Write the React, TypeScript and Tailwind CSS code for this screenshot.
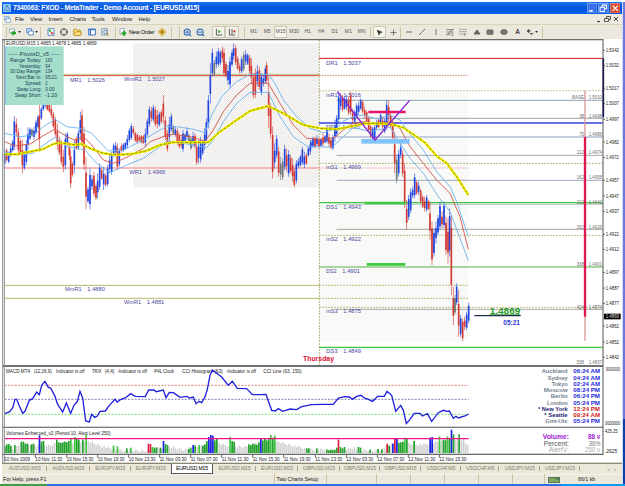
import type { ReactNode } from "react";
import { MousePointer2, Plus, ZoomIn, ZoomOut, FolderOpen, Crosshair } from "lucide-react";

// candles: x, high, low, side (1 up, 0 down, 2 flat)
type Candle = [number, number, number, number];
type Point = [number, number];

const tuesday: Candle[] = [
  [14, 325, 385, 1], [20, 325, 365, 0], [26, 335, 370, 1], [32, 315, 350, 1], [38, 300, 335, 1], [43, 228, 330, 1],
  [49, 235, 290, 0], [55, 265, 340, 0], [61, 295, 345, 0], [67, 300, 400, 0], [73, 335, 390, 1], [79, 300, 375, 1],
  [84, 262, 330, 1], [90, 262, 300, 1], [96, 265, 290, 2], [102, 260, 300, 1], [108, 240, 285, 1], [114, 225, 265, 1],
  [118, 180, 335, 0], [124, 200, 240, 1], [130, 178, 212, 1], [136, 170, 205, 1], [142, 185, 212, 0], [148, 190, 218, 0],
  [154, 195, 235, 0], [160, 215, 265, 0], [166, 230, 290, 0], [172, 250, 330, 0], [178, 290, 345, 0], [184, 300, 375, 0],
  [190, 330, 397, 0], [196, 280, 390, 1], [202, 275, 320, 1], [208, 305, 360, 0], [212, 330, 445, 0], [217, 365, 410, 0],
  [223, 300, 400, 1], [229, 290, 330, 0], [235, 270, 330, 1], [241, 215, 300, 1], [246, 208, 320, 0], [252, 260, 390, 0],
  [258, 350, 508, 0], [264, 440, 490, 1], [270, 385, 508, 1], [276, 405, 450, 1], [282, 395, 470, 0], [288, 430, 480, 0],
  [293, 400, 475, 1], [299, 370, 450, 1], [305, 385, 420, 0], [311, 380, 450, 1], [317, 400, 440, 0], [323, 375, 440, 1],
  [329, 345, 400, 1], [335, 335, 405, 1], [341, 310, 350, 1], [347, 305, 345, 1], [352, 310, 390, 0], [358, 325, 380, 1],
  [364, 310, 340, 0], [370, 310, 335, 1], [376, 305, 330, 1], [382, 285, 325, 1], [388, 265, 305, 1], [394, 250, 300, 1],
  [400, 258, 285, 0], [406, 275, 305, 0], [412, 280, 310, 0], [418, 285, 305, 0], [424, 285, 310, 0], [430, 285, 312, 0],
  [436, 265, 320, 1], [442, 235, 290, 1], [448, 198, 260, 1],
];

const wednesday: Candle[] = [
  [4, 200, 245, 0], [10, 195, 245, 1], [16, 200, 260, 0], [22, 210, 265, 0], [28, 215, 260, 1], [34, 210, 250, 0],
  [40, 165, 250, 0], [46, 230, 300, 0], [52, 270, 335, 0], [58, 230, 310, 1], [64, 220, 275, 1], [70, 255, 285, 2],
  [76, 260, 290, 1], [82, 265, 315, 0], [88, 280, 325, 0], [94, 290, 325, 0], [99, 270, 335, 1], [105, 280, 305, 1],
  [111, 262, 300, 1], [117, 280, 315, 2], [123, 290, 330, 2], [129, 275, 320, 1], [135, 280, 325, 0], [140, 310, 375, 0],
  [146, 300, 370, 1], [152, 290, 368, 1], [158, 300, 345, 1], [164, 265, 330, 1], [169, 235, 310, 1], [175, 165, 265, 1],
  [181, 70, 190, 1], [187, 25, 110, 1], [193, 60, 110, 2], [199, 35, 85, 1], [205, 25, 80, 1], [211, 30, 75, 1],
  [217, 20, 65, 0], [222, 25, 110, 0], [228, 65, 112, 0], [234, 75, 135, 1], [240, 50, 145, 1], [246, 30, 80, 1],
  [251, 10, 60, 1], [257, 15, 75, 0], [263, 50, 90, 0], [269, 70, 100, 0], [275, 50, 100, 1], [281, 35, 95, 2],
  [287, 30, 75, 1], [293, 40, 75, 1], [299, 45, 100, 0], [304, 55, 130, 0], [310, 100, 175, 0], [316, 85, 175, 0],
  [322, 75, 140, 1], [328, 80, 150, 0], [334, 100, 165, 1], [340, 105, 140, 1], [346, 78, 130, 1], [350, 65, 130, 0],
  [356, 110, 265, 0], [362, 190, 295, 0], [368, 260, 415, 0], [374, 310, 385, 1], [380, 285, 355, 1], [386, 320, 410, 0],
  [392, 350, 420, 2], [398, 355, 420, 2], [404, 315, 390, 1], [410, 325, 395, 0], [416, 330, 410, 1], [422, 345, 400, 0],
  [428, 355, 425, 0], [433, 385, 442, 0], [439, 360, 430, 1], [445, 355, 385, 1], [451, 345, 380, 1], [457, 320, 375, 1],
  [463, 335, 385, 1], [469, 340, 375, 0], [475, 320, 350, 1], [481, 300, 345, 1],
];

const thursday: Candle[] = [
  [3, 300, 325, 1], [9, 290, 325, 1], [15, 290, 325, 0], [21, 285, 320, 1], [27, 295, 325, 0], [33, 295, 320, 1],
  [39, 280, 320, 0], [45, 285, 310, 1], [51, 260, 310, 1], [57, 280, 320, 0], [63, 295, 328, 0], [69, 285, 330, 1],
  [75, 240, 305, 1], [80, 225, 290, 1], [86, 155, 250, 1], [92, 160, 210, 1], [98, 165, 215, 0], [104, 170, 210, 1],
  [110, 165, 210, 1], [116, 170, 225, 0], [122, 155, 225, 0], [128, 205, 250, 0], [134, 210, 250, 1], [140, 190, 235, 1],
  [146, 185, 225, 1], [152, 175, 210, 1], [158, 180, 220, 0], [164, 200, 235, 0], [170, 210, 250, 0], [176, 230, 275, 0],
  [182, 245, 295, 0], [188, 260, 298, 1], [194, 255, 300, 1], [200, 240, 270, 1], [206, 235, 265, 0], [212, 220, 255, 1],
  [218, 230, 270, 0], [224, 235, 280, 1], [230, 180, 270, 1], [236, 182, 245, 0], [242, 220, 265, 0], [248, 240, 300, 0],
  [254, 275, 400, 0], [260, 345, 430, 2], [266, 330, 410, 1], [272, 308, 355, 1], [278, 330, 410, 0], [284, 370, 505, 0],
  [290, 480, 570, 0], [296, 465, 540, 1], [302, 445, 520, 1], [308, 440, 475, 1], [314, 400, 475, 1], [320, 420, 465, 0],
  [326, 425, 465, 1], [332, 445, 490, 0], [338, 465, 505, 0], [344, 470, 515, 0], [350, 465, 515, 1], [356, 480, 510, 0],
  [360, 485, 600, 0], [366, 545, 675, 0], [372, 565, 650, 1], [378, 545, 610, 1], [384, 525, 585, 1], [390, 485, 570, 1],
  [396, 515, 565, 0], [402, 485, 565, 1], [408, 530, 645, 0], [414, 535, 670, 0], [419, 505, 650, 1], [424, 525, 765, 0],
  [430, 740, 855, 0], [435, 765, 825, 2], [440, 730, 795, 1], [446, 750, 890, 0], [452, 825, 890, 1], [458, 835, 903, 0],
  [464, 830, 870, 0], [470, 815, 870, 1], [476, 788, 850, 1],
];

const slow: Point[] = [
  [14, 343], [50, 343], [90, 335], [130, 327], [160, 312], [180, 308], [225, 315], [245, 312], [270, 325], [310, 340], [350, 345],
  [400, 341], [440, 332], [480, 315], [520, 307], [625, 307], [660, 275], [710, 240], [750, 213], [805, 198], [850, 220],
  [910, 255], [960, 265], [1010, 268], [1060, 258], [1095, 250], [1170, 252], [1210, 263], [1250, 290], [1275, 308], [1310, 348],
  [1340, 370], [1370, 410], [1405, 465],
];
const mid: Point[] = [
  [14, 305], [45, 318], [90, 312], [125, 290], [165, 267], [200, 290], [225, 300], [250, 290], [275, 315], [310, 360], [340, 370],
  [385, 350], [430, 325], [450, 305], [495, 288], [520, 283], [570, 290], [615, 303], [640, 270], [670, 215], [710, 165],
  [750, 130], [805, 130], [840, 190], [880, 255], [920, 295], [970, 298], [1005, 292], [1030, 270], [1060, 250], [1090, 245],
  [1130, 250], [1175, 245], [1200, 265], [1230, 320], [1270, 370], [1310, 420], [1350, 460], [1380, 530], [1405, 628],
];
const upper: Point[] = [
  [14, 280], [60, 290], [100, 285], [130, 260], [165, 238], [200, 260], [240, 265], [275, 280], [325, 333], [370, 330], [430, 300],
  [480, 270], [500, 260], [530, 260], [580, 268], [615, 278], [635, 225], [665, 170], [710, 125], [750, 103], [805, 103],
  [825, 130], [850, 180], [890, 230], [930, 265], [970, 278], [1010, 265], [1030, 243], [1060, 230], [1090, 225], [1130, 237],
  [1170, 225], [1200, 240], [1230, 282], [1270, 330], [1310, 395], [1350, 440], [1370, 485], [1405, 590],
];
const lower: Point[] = [
  [14, 335], [50, 345], [100, 340], [130, 315], [165, 292], [200, 320], [230, 325], [255, 330], [290, 370], [330, 398], [380, 375],
  [430, 355], [480, 320], [500, 303], [550, 310], [620, 323], [640, 300], [670, 245], [710, 190], [750, 157], [805, 157],
  [840, 230], [880, 290], [920, 318], [995, 322], [1030, 290], [1060, 262], [1110, 275], [1170, 262], [1200, 310], [1230, 355],
  [1270, 400], [1315, 470], [1350, 515], [1405, 662],
];
const cci: Point[] = [
  [14, 155], [28, 150], [38, 138], [45, 112], [50, 112], [58, 132], [68, 154], [75, 148], [88, 115], [98, 110], [110, 90], [118, 98],
  [125, 70], [135, 58], [145, 76], [152, 78], [165, 103], [172, 125], [188, 150], [199, 123], [212, 154], [222, 130], [232, 118],
  [240, 88], [248, 108], [257, 177], [268, 180], [275, 157], [284, 166], [292, 162], [300, 148], [316, 147], [328, 130], [345, 112],
  [352, 120], [363, 112], [376, 108], [392, 95], [406, 103], [436, 104], [446, 84], [462, 84], [468, 89], [490, 84], [498, 107],
  [508, 91], [520, 92], [540, 106], [560, 103], [570, 108], [580, 105], [588, 125], [597, 118], [605, 122], [615, 105], [622, 82],
  [630, 40], [637, 24], [648, 32], [665, 45], [685, 70], [697, 58], [712, 79], [740, 80], [757, 98], [780, 98], [798, 97],
  [815, 145], [826, 147], [835, 140], [848, 148], [870, 141], [890, 143], [905, 134], [935, 128], [965, 127], [1000, 127],
  [1015, 108], [1035, 104], [1048, 105], [1057, 112], [1070, 103], [1083, 100], [1093, 108], [1105, 112], [1118, 118],
  [1133, 103], [1153, 103], [1161, 88], [1175, 100], [1187, 148], [1202, 130], [1210, 145], [1219, 185], [1230, 172], [1243, 154],
  [1260, 154], [1267, 162], [1282, 155], [1295, 178], [1315, 152], [1330, 145], [1340, 148], [1348, 147], [1360, 169],
  [1368, 163], [1375, 168], [1395, 162], [1406, 156],
];

// quiet volume envelope
const quiet: Point[] = [
  [14, 20], [38, 12], [60, 26], [116, 24], [150, 22], [170, 32], [220, 30], [260, 38], [290, 26], [330, 14], [380, 8], [440, 8],
  [470, 14], [510, 18], [550, 10], [600, 20], [650, 32], [690, 20], [730, 18], [780, 30], [840, 32], [880, 22], [920, 12],
  [960, 10], [1020, 10], [1060, 16], [1090, 8], [1130, 8], [1160, 18], [1190, 36], [1230, 28], [1270, 24], [1300, 32],
  [1350, 40], [1390, 42], [1406, 14],
];
// marked volume bars: x, height, colour
const G = "#23a32b", L = "#3fc83f", B = "#1a22e6", R = "#e01f45";
const marked: [number, number, string][] = [
  [14, 20, G], [20, 26, G], [26, 27, G], [32, 22, G], [44, 24, G], [64, 34, G], [70, 34, G], [76, 28, G], [82, 28, G], [94, 26, G],
  [100, 28, G], [118, 53, B], [124, 34, G], [130, 36, G], [170, 40, G], [176, 32, G], [182, 30, G], [188, 32, G], [194, 34, G],
  [200, 32, G], [206, 36, G], [212, 44, L], [224, 48, L], [230, 42, G], [236, 40, G], [248, 40, G], [258, 56, L],
  [340, 22, L], [352, 20, L], [380, 14, G], [392, 16, L], [445, 28, R], [451, 27, R], [457, 18, L], [463, 16, G], [469, 17, G],
  [481, 16, G], [490, 36, B], [496, 27, G], [502, 24, G], [566, 12, G], [572, 16, L], [579, 24, B], [585, 22, G], [597, 24, L],
  [608, 22, G], [614, 26, G], [620, 36, G], [626, 48, B], [632, 54, B], [638, 52, B], [644, 38, G], [650, 42, G],
  [690, 48, L], [696, 36, G], [702, 34, G], [746, 26, G], [752, 24, G], [758, 28, G], [764, 26, G], [770, 24, G], [776, 32, G],
  [782, 44, B], [788, 38, G], [794, 42, G], [800, 38, G], [806, 44, G], [812, 54, L], [818, 46, G], [824, 52, L],
  [920, 14, G], [926, 14, G], [950, 14, G], [980, 10, G], [986, 8, G], [992, 10, G], [998, 8, G], [1004, 10, G], [1010, 16, G],
  [1015, 40, R], [1021, 18, G], [1027, 14, G], [1033, 18, G], [1075, 18, G], [1081, 16, G], [1110, 10, G], [1134, 12, G],
  [1145, 10, G], [1161, 28, R], [1167, 22, G], [1178, 28, B], [1184, 42, R], [1190, 42, B], [1196, 30, G], [1202, 32, G],
  [1208, 34, G], [1214, 46, L], [1220, 42, G], [1242, 36, G], [1290, 46, B], [1296, 48, B], [1318, 50, L], [1330, 40, G],
  [1336, 38, G], [1342, 50, L], [1348, 44, G], [1354, 70, B], [1360, 56, G], [1377, 56, G],
];

const levels: [number, number, number, string, number, string?][] = [
  [957, 1808, 175, "#dd1111", 3], [14, 957, 223, "#a8a850", 2], [14, 957, 227, "#d24a3c", 3],
  [957, 1406, 226, "#cf8a76", 3, "5 3"], [957, 1808, 272, "#b5b068", 2, "6 3"],
  [1010, 1808, 301, "#7c93a8", 2.5], [1010, 1808, 355, "#8f9494", 2.5], [957, 1808, 369, "#3440dd", 4.5],
  [1010, 1808, 411, "#b3bcd4", 4], [1010, 1808, 466, "#8f9494", 2.5], [957, 1808, 490, "#a5ab68", 2.5, "6 3"],
  [14, 957, 504, "#f3a6a6", 4], [957, 1406, 504, "#f1aaa4", 3.5, "5 3"], [1010, 1808, 541, "#8796ad", 2.5],
  [957, 1808, 608, "#3ec43e", 3.5], [1010, 1808, 613, "#c3cdc9", 4], [1010, 1808, 688, "#8f9488", 2.5],
  [957, 1808, 706, "#b5b068", 2.5, "6 3"], [957, 1808, 801, "#57b044", 3], [14, 957, 856, "#b9b66a", 3],
  [957, 1406, 856, "#b5b068", 2.5, "6 3"], [14, 957, 895, "#b9b66a", 3], [957, 1406, 895, "#b5b068", 2.5, "6 3"],
  [957, 1808, 922, "#b5b068", 2.5, "6 3"], [1010, 1808, 928, "#8f9494", 2.5], [957, 1808, 1042, "#3ec43e", 3.5],
];

const pivots: [number, number, number, string, string][] = [
  [210, 315, 245, "MR1", "1.5026"], [372, 495, 243, "WmR2", "1.5027"], [388, 496, 522, "WR1", "1.4966"],
  [978, 1083, 194, "DR1", "1.5037"], [978, 1083, 290, "mR1", "1.5016"], [978, 1080, 387, "DP1", "1.4995"],
  [978, 1083, 507, "mS1", "1.4969"], [978, 1083, 626, "DS1", "1.4943"], [978, 1083, 723, "mS2", "1.4922"],
  [978, 1080, 819, "DS2", "1.4901"], [978, 1083, 940, "mS3", "1.4875"], [978, 1083, 1059, "DS3", "1.4849"],
  [195, 315, 873, "MmR1", "1.4880"], [372, 493, 912, "WmR1", "1.4881"],
];

const prices: [number, string][] = [
  [151, "1.5042"], [196, "1.5032"], [265, "1.5017"], [311, "1.5007"], [358, "1.4997"], [426, "1.4982"], [472, "1.4972"],
  [541, "1.4957"], [588, "1.4947"], [634, "1.4937"], [703, "1.4922"], [748, "1.4912"], [817, "1.4897"], [864, "1.4887"],
  [910, "1.4877"], [978, "1.4862"], [1026, "1.4852"], [1072, "1.4842"],
];

const fibs: [number, string, string][] = [
  [292, "BASE", "1.5010"], [348, "38", "1.4998"], [403, "75", "1.4986"], [458, "112", "1.4974"], [532, "162", "1.4958"],
  [607, "212", "1.4942"], [681, "262", "1.4926"], [793, "338", "1.4901"], [922, "424", "1.4874"], [1088, "538", "1.4837"],
];

const clocks: [string, string, number, boolean][] = [
  ["Auckland", "06:24 AM", 1625, false], ["Sydney", "04:24 AM", 1643, false], ["Tokyo", "02:24 AM", 1655, false],
  ["Moscow", "08:24 PM", 1631, false], ["Berlin", "06:24 PM", 1652, false], ["London", "05:24 PM", 1641, false],
  ["* New York", "12:24 PM", 1614, true], ["* Seattle", "09:24 AM", 1633, true], ["Gmt-Utc", "05:24 PM", 1636, false],
];

const info: [string, string, number][] = [
  ["Range Today:", "163", 30], ["Yesterday:", "94", 57], ["30 Day Range:", "134", 30], ["Next Bar In:", "05:21", 48],
  ["Spread:", "2", 75], ["Swap Long:", "0.00", 50], ["Swap Short:", "-1.20", 44],
];

const times: [number, string][] = [
  [12, "10 Nov 2009"], [105, "10 Nov 11:30"], [199, "10 Nov 15:30"], [292, "10 Nov 19:30"], [385, "10 Nov 23:30"],
  [478, "11 Nov 03:30"], [571, "11 Nov 07:30"], [664, "11 Nov 11:30"], [757, "11 Nov 15:30"], [850, "11 Nov 19:30"],
  [945, "11 Nov 23:30"], [1038, "12 Nov 03:30"], [1131, "12 Nov 07:30"], [1224, "12 Nov 11:30"], [1317, "12 Nov 15:30"],
];

const headings: [number, number, string][] = [
  [18, 90, "MACD MT4"], [101, 155, "(12,26,9)"], [168, 254, "Indicator is off"], [276, 305, "TRIX"], [314, 343, "(4,4)"],
  [352, 441, "-Indicator is off"], [463, 522, "P4L Clock"], [546, 668, "CCI Histogram (63)"], [678, 768, "-Indicator is off"],
  [790, 905, "CCI Line (63, 150)"],
];

const volumeAt = (x: number) => {
  const i = Math.max(1, quiet.findIndex((p) => p[0] >= x));
  const [x0, y0] = quiet[i - 1];
  const [x1, y1] = quiet[i];
  return y0 + ((y1 - y0) * (x - x0)) / (x1 - x0) + ((x * 7) % 9) - 5;
};

const line = (pts: Point[]) => pts.map((p) => p.join(",")).join(" ");

type LabelProps = { x: number; end: number; y: number; size?: number; fill?: string; bold?: boolean; children: string };

const Label = ({ x, end, y, size = 15.5, fill = "#222", bold, children }: LabelProps) => (
  <text x={x} y={y} fontSize={size} fill={fill} fontWeight={bold ? 700 : 400} textLength={end - x} lengthAdjust="spacingAndGlyphs">
    {children}
  </text>
);

const Candles = ({ data, dx }: { data: Candle[]; dx: number }) => (
  <g transform={`translate(${dx} 120)`}>
    {data.map(([x, high, low, side], i) => {
      const color = side === 1 ? "#2146e0" : side === 0 ? "#d23a34" : "#6d7577";
      const pad = (low - high) * (i % 3 === 0 ? 0.3 : 0.16);
      return (
        <g key={x} fill={color}>
          <rect x={x - 1.2} y={high} width={2.4} height={low - high} opacity={0.75} />
          <rect x={x - 2.5} y={high + pad} width={5} height={low - high - pad * 1.8} />
        </g>
      );
    })}
  </g>
);

const Chart = () => (
  <svg viewBox="6 117 1860 1275" className="block w-[620px] h-[425px] shrink-0" fontFamily="'Liberation Sans', sans-serif">
    <defs>
      <pattern id="dots" width="6" height="6" patternUnits="userSpaceOnUse">
        <rect width="6" height="6" fill="#faf9f8" />
        <rect width="3" height="3" fill="#e6e5e4" />
        <rect x="3" y="3" width="3" height="3" fill="#eeedec" />
      </pattern>
    </defs>
    <rect x="6" y="117" width="1860" height="1275" fill="#fff" />
    <rect x="399" y="130" width="558" height="433" fill="url(#dots)" />
    <rect x="957" y="272" width="449" height="752" fill="#f9f9f8" />
    <line x1="958" x2="958" y1="120" y2="1095" stroke="#b5b585" strokeWidth="3" strokeDasharray="6 3" />

    {levels.map(([x1, x2, y, stroke, w, dash], i) => (
      <line key={i} x1={x1} x2={x2} y1={y} y2={y} stroke={stroke} strokeWidth={w} strokeDasharray={dash} />
    ))}
    {pivots.map(([x, end, y, name, value]) => (
      <g key={name}>
        <Label x={x} end={end - 70} y={y} size={18} fill="#4a4a9c">{name}</Label>
        <Label x={end - 53} end={end} y={y} size={18} fill="#4a4a9c">{value}</Label>
      </g>
    ))}

    <Candles data={tuesday} dx={0} />
    <Candles data={wednesday} dx={450} />
    <Candles data={thursday} dx={930} />

    <g transform="translate(0 120)" fill="none" strokeLinejoin="round">
      <polyline points={line(upper)} stroke="#6fb4ec" strokeWidth="2.8" />
      <polyline points={line(lower)} stroke="#6fb4ec" strokeWidth="2.8" />
      <polyline points={line(mid)} stroke="#d4564e" strokeWidth="2.8" />
      <polyline points={line(slow)} stroke="#f8f400" strokeWidth="7.5" />
      <polyline points={line(slow)} stroke="#6b6b00" strokeWidth="2.2" strokeDasharray="9 4" />
      <rect x="1084" y="297" width="145" height="14" fill="#82c3fa" />
      <path d="M1105 216h112" stroke="#e8156a" strokeWidth="7" />
      <path d="M1095 489h122M1100 673h116" stroke="#3ecb3e" strokeWidth="8" />
      <path d="M1012 155L1125 300L1229 181" stroke="#8f22cf" strokeWidth="4" />
      <path d="M1755 152v750" stroke="#d79a98" strokeWidth="4" />
      <path d="M1755 291v539" stroke="#e3174f" strokeWidth="7" />
    </g>

    {fibs.map(([y, level, value]) => (
      <g key={y}>
        <Label x={1752 - level.length * (level === "BASE" ? 9 : 7.3)} end={1752} y={y + 5} size={14.5} fill="#6f6f6f">{level}</Label>
        <Label x={1766} end={1806} y={y + 5} size={14.5} fill="#6f6f6f">{value}</Label>
      </g>
    ))}

    <Label x={1469} end={1561} y={942} size={29} fill="#2d9a2d" bold>1.4869</Label>
    <path d="M1469 944h92" stroke="#2d9a2d" strokeWidth="2.5" />
    <path d="M1423 947h139" stroke="#22304a" strokeWidth="3.5" />
    <Label x={1510} end={1560} y={974} size={19} fill="#2a35d6" bold>05:21</Label>
    <Label x={909} end={1002} y={1082} size={20} fill="#dc1238" bold>Thursday</Label>

    {/* pivots box */}
    <rect x="15" y="139" width="176" height="176" fill="#a5dfcc" />
    <rect x="15" y="139" width="4" height="176" fill="#8fc6ee" />
    <Label x={18} end={290} y={136} size={15}>EURUSD,M15  1.4865 1.4878 1.4865 1.4869</Label>
    <Label x={25} end={181} y={167} fill="#1c3d53">----- PivotsD_v5 -----</Label>
    {info.map(([name, value, x], i) => (
      <g key={name}>
        <Label x={x} end={125} y={185 + i * 17.6} fill="#173d54">{name}</Label>
        <Label x={136} end={136 + value.length * 7} y={185 + i * 17.6} fill="#173d54">{value}</Label>
      </g>
    ))}

    {/* indicator windows */}
    <rect x="6" y="1095" width="1803" height="6" fill="#6f7273" />
    <path d="M14 1156H1406" stroke="#d96a5f" strokeWidth="2.5" strokeDasharray="6 4" />
    <path d="M14 1198H1406" stroke="#6b6bb0" strokeWidth="2.5" strokeDasharray="6 4" />
    <path d="M14 1243H1406" stroke="#5cd65c" strokeWidth="2.5" strokeDasharray="6 4" />
    {headings.map(([x, end, text]) => <Label key={x} x={x} end={end} y={1119} size={15}>{text}</Label>)}
    <polyline points={line(cci)} transform="translate(0 1086)" fill="none" stroke="#2020dd" strokeWidth="4" />
    <rect x="6" y="1280" width="1803" height="4" fill="#777a7b" />

    <g transform="translate(0 1086)">
      {Array.from({ length: 234 }, (_, i) => 14 + i * 5.96).map((x) => {
        const h = Math.max(4, volumeAt(x));
        return <rect key={x} x={x - 2} y={273 - h} width={4.4} height={h} fill="#cfcfcf" />;
      })}
      {marked.map(([x, h, fill]) => <rect key={x} x={x - 2} y={273 - h} width={5} height={h} fill={fill} />)}
    </g>
    <path d="M14 1316H1406" stroke="#ee1488" strokeWidth="3.5" />
    <Label x={18} end={332} y={1304} size={15}>Volumes Enhanced_v2  (Period 10, Alert Level 250)</Label>
    <rect x="6" y="1361" width="1803" height="4" fill="#6a6d6e" />

    {clocks.map(([city, time, x, open], i) => (
      <g key={city}>
        <Label x={x} end={1703} y={1120 + i * 18.8} size={18} bold fill={open ? "#1d1d78" : "#73818f"}>{city}</Label>
        <Label x={1720} end={1800} y={1120 + i * 18.8} size={18} bold fill={open ? "#cf2020" : "#2727d8"}>{time}</Label>
      </g>
    ))}
    <Label x={1628} end={1707} y={1317} size={19} bold fill="#a020d0">Volume:</Label>
    <Label x={1764} end={1801} y={1317} size={19} bold fill="#a020d0">88 v</Label>
    <Label x={1631} end={1707} y={1337} size={19} fill="#555">Percent:</Label>
    <Label x={1766} end={1801} y={1337} size={19} fill="#777">36%</Label>
    <Label x={1646} end={1707} y={1357} size={19} fill="#aaa">AlertV:</Label>
    <Label x={1754} end={1801} y={1357} size={19} fill="#aaa">250 v</Label>

    {/* price scale */}
    <path d="M1809 117V1365" stroke="#555" strokeWidth="3" />
    <path d="M1810 175V351" stroke="#1d1d50" strokeWidth="5" />
    {prices.map(([y, text]) => (
      <g key={y}>
        <path d={`M1810 ${y}h5`} stroke="#444" strokeWidth="2.5" />
        <Label x={1817} end={1857} y={y + 5}>{text}</Label>
      </g>
    ))}
    <rect x="1812" y="941" width="50" height="17" fill="#000" />
    <Label x={1817} end={1857} y={955} fill="#ddd">1.4869</Label>
    <Label x={1815} end={1860} y={1114} size={14}>.9000000</Label>
    <Label x={1813} end={1860} y={1276} size={14}>.9000000</Label>
    <Label x={1815} end={1853} y={1299} size={15}>425.25</Label>
    <Label x={1815} end={1852} y={1358} size={15}>.2625</Label>

    {times.map(([x, text], i) => (
      <g key={x}>
        {i > 0 && <path d={`M${x + 1} 1365v8`} stroke="#444" strokeWidth="2.5" />}
        <Label x={x + 1} end={x + (i ? 82 : 78)} y={1382}>{text}</Label>
      </g>
    ))}
    <rect x="6" y="1388" width="1860" height="4" fill="#8a8672" />
    <path d="M8 117V1388" stroke="#8c8c8c" strokeWidth="3" />
    <path d="M13 117V1388" stroke="#8a8d8d" strokeWidth="3" />
    <path d="M6 119H1809" stroke="#6b6b6b" strokeWidth="4" />
  </svg>
);

const Cell = ({ children, wide }: { children: ReactNode; wide?: boolean }) => (
  <div className={wide ? "w-[15.5px] flex items-center justify-center gap-[1px]" : "w-[13.6px] flex items-center justify-center"}>{children}</div>
);

const Sep = () => <div className="w-[1px] h-[11px] bg-[#c9c3a0]" />;

const Caret = () => (
  <svg viewBox="0 0 4 3" className="w-[3px] h-[2px]"><path d="M0 0h4L2 3z" fill="#222" /></svg>
);

const Icon = ({ children }: { children: ReactNode }) => (
  <svg viewBox="0 0 24 24" className="w-[8px] h-[8px]" fill="none" stroke="#55584f" strokeWidth="2.5">{children}</svg>
);

const frames = ["M1", "M5", "M15", "M30", "H1", "H4", "D1", "W1", "MN"];

const Toolbar = () => (
  <div className="h-[15px] bg-[#ebe9dd] border-t border-[#d8d3b4] flex items-center shrink-0 pl-[4px] text-[5px] text-[#555]">
    <Sep />
    <Cell wide>
      <Icon><path d="M2 3h15v12H2z" fill="#fff" stroke="#8a9aa8" /><path d="M13 9v13M7 15h14" stroke="#24a52b" strokeWidth="6" /></Icon>
      <Caret />
    </Cell>
    <div className="w-[2px]" />
    <Cell wide>
      <Icon><path d="M2 2h15v12H2z" fill="#cfe3fa" stroke="#4d80c4" /><path d="M8 9h14v12H8z" fill="#fff" stroke="#4d80c4" /></Icon>
      <Caret />
    </Cell>
    <Sep />
    <div className="w-[3px]" />
    <Cell><Icon><path d="M3 2h18v20H3z" fill="#fff" stroke="#3f78c4" /><path d="M6 6l6 5" stroke="#24a52b" strokeWidth="5" /><path d="M12 13l6 5" stroke="#dd3333" strokeWidth="5" /></Icon></Cell>
    <Cell><Crosshair size={8} color="#555" strokeWidth={3} /></Cell>
    <Cell><FolderOpen size={9} color="#b88b1c" fill="#ffe27a" strokeWidth={2.5} /></Cell>
    <Cell><Icon><path d="M2 3h20v18H2z" fill="#fff" stroke="#3f78c4" strokeWidth="3" /><path d="M2 5h20M7 5v16" stroke="#3f78c4" strokeWidth="4" /></Icon></Cell>
    <Cell><Icon><path d="M2 2h17v19H2z" fill="#dce8f4" stroke="#7b92ac" /><circle cx="13" cy="12" r="5" stroke="#44739e" fill="#fff" /><path d="M17 16l5 6" stroke="#b88b1c" strokeWidth="4" /></Icon></Cell>
    <div className="w-[3px]" />
    <Sep />
    <div className="w-[3px]" />
    <div className="w-[9px] flex justify-center">
      <Icon><path d="M3 1h12v17H3z" fill="#fff" stroke="#8a9aa8" /><path d="M15 9v14M8 16h14" stroke="#24a52b" strokeWidth="6" /></Icon>
    </div>
    <div className="w-[27px] pl-[1px] text-[5.6px] tracking-[-0.2px] text-black whitespace-nowrap">New Order</div>
    <Cell><Icon><path d="M12 1l11 11-11 11L1 12z" fill="#f7cf52" stroke="#b98b1c" /><path d="M12 6v12M7 12h10" stroke="#80600a" strokeWidth="3" /></Icon></Cell>
    <div className="w-[2px]" />
    <Sep />
    <div className="w-[7px]" />
    <Sep />
    <div className="w-[1px]" />
    <Cell><ZoomIn size={9} color="#3a73bb" strokeWidth={3} /></Cell>
    <Cell><ZoomOut size={9} color="#3a73bb" strokeWidth={3} /></Cell>
    <div className="w-[4px]" />
    <div className="w-[13.6px] h-[12px] flex items-center justify-center bg-[#f5f4ec] border border-[#cbc8b4]">
      <Icon><path d="M4 2v19h18" strokeWidth="3" /><path d="M10 5v11l8-5z" fill="#24a52b" stroke="none" /></Icon>
    </div>
    <div className="w-[13.6px] h-[12px] flex items-center justify-center bg-[#f5f4ec] border border-[#cbc8b4]">
      <Icon><path d="M4 2v19h18M12 3v15" strokeWidth="3" /><path d="M22 5v10l-8-5z" fill="#c33" stroke="none" /></Icon>
    </div>
    <div className="w-[5px]" />
    <Sep />
    <div className="w-[2px]" />
    {frames.map((f) => (
      <div key={f} className={f === "M15" ? "w-[13.5px] h-[12px] flex items-center justify-center bg-[#f6f5ee] border border-[#cbc8b4]" : "w-[13.5px] flex items-center justify-center"}>{f}</div>
    ))}
    <div className="w-[2px]" />
    <Sep />
    <div className="w-[2px]" />
    <div className="w-[13px] h-[12px] flex items-center justify-center bg-[#f6f5ee] border border-[#cbc8b4]">
      <MousePointer2 size={7} color="#333" fill="#333" />
    </div>
    <Cell><Plus size={9} color="#555" strokeWidth={2} /></Cell>
    <Sep />
    <div className="w-[1px]" />
    <Cell><Icon><path d="M3 12h18" /></Icon></Cell>
    <Cell><Icon><path d="M3 21L21 3" /></Icon></Cell>
    <Cell><Icon><path d="M12 3v18" /></Icon></Cell>
    <Cell><Icon><path d="M1 5h22M1 12h22M1 19h12M3 22L21 2M16 17h6M16 22h6" strokeWidth="2" /></Icon></Cell>
    <Cell><Icon><path d="M1 4h22M1 11h22M1 18h13M17 15v8M14 19h8" strokeWidth="2" strokeDasharray="4 2" /></Icon></Cell>
    <Cell><Icon><path d="M12 6l9 12H3z" fill="#666" /></Icon></Cell>
    <Cell><Icon><rect x="3" y="6" width="18" height="13" rx="2" fill="#777" /></Icon></Cell>
    <Cell><Icon><ellipse cx="12" cy="12" rx="10" ry="7" fill="#777" /></Icon></Cell>
    <Cell><span className="text-[6.5px] font-bold text-[#444]">A</span></Cell>
    <Cell wide><Icon><path d="M3 9l5-5 5 5-5 5zM12 15l4 5 6-5" fill="#555" /></Icon><Caret /></Cell>
    <div className="w-[2px]" />
    <Sep />
  </div>
);

const tabs: [string, string][] = [
  ["AUDUSD,M15", "w-[43.5px]"], ["AUDUSD,M15", "w-[43.5px]"], ["EURJPY,M15", "w-[40.5px]"], ["EURJPY,M15", "w-[40.5px]"],
  ["EURUSD,M15", "w-[42px]"], ["EURUSD,M15", "w-[43px]"], ["EURUSD,M15", "w-[42px]"], ["GBPUSD,M15", "w-[41.7px]"],
  ["GBPUSD,M15", "w-[40.3px]"], ["GBPUSD,M15", "w-[41px]"], ["USDCHF,M5", "w-[40px]"], ["USDCHF,M5", "w-[38.5px]"],
  ["USDJPY,M15", "w-[40.5px]"], ["USDJPY,M15", "w-[40px]"],
];

const Tabs = () => (
  <div className="h-[10px] flex shrink-0 bg-[#ebe8d9] pl-[1px] text-[5.2px] leading-[9px] tracking-[-0.12px] text-[#827f6b]">
    {tabs.map(([name, width], i) => (
      <div key={i} className={`${width} shrink-0 text-center ${i === 4 ? "bg-white text-black border-x border-b border-[#555]" : "relative"}`}>
        {name}
        {i !== 4 && i !== 3 && <span className="absolute right-0 top-[2px] w-[1px] h-[5px] bg-[#a7a38c]" />}
      </div>
    ))}
    <div className="ml-auto pr-[6px] flex items-center gap-[5px] text-[6px] text-[#777]"><span>‹</span><span>›</span></div>
  </div>
);

const Status = () => (
  <div className="h-[10px] flex items-center shrink-0 bg-[#ebe8db] border-t border-[#f7f5ea] text-[5.4px] tracking-[-0.07px] text-[#222] whitespace-nowrap">
    <div className="w-[271.5px] pl-[1px]">For Help, press F1</div>
    <Sep />
    <div className="w-[51.5px] pl-[2px]">Two Charts Setup</div>
    <Sep />
    <div className="w-[49px]" /><Sep />
    <div className="w-[33px]" /><Sep />
    <div className="w-[33px]" /><Sep />
    <div className="w-[33px]" /><Sep />
    <div className="w-[33px]" /><Sep />
    <div className="w-[31px]" /><Sep />
    <div className="w-[33px] pl-[3px]">
      <svg viewBox="0 0 12 6" className="w-[12px] h-[6px]">
        <rect width="12" height="6" fill="#4c7c58" />
        <path d="M2 1v4M4 1v4M6 1v4M8 2v3M10 3v2" stroke="#d5e36a" strokeWidth="0.8" />
      </svg>
    </div>
    <div>66/1 kb</div>
  </div>
);

const App = () => {
  return (
    <div className="w-[625px] h-[486px] overflow-hidden bg-white flex flex-col font-['Liberation_Sans',sans-serif]">
      <div className="flex h-[484px] pt-[2px]">
        <div className="w-[620px] ml-[2px] flex flex-col">
          <div className="h-[12px] shrink-0 flex items-center bg-gradient-to-b from-[#1c74f2] via-[#0553dc] to-[#0560f0] pl-[1px] pr-[2px]">
            <svg viewBox="0 0 24 24" className="w-[8px] h-[8px] mr-[2px]">
              <rect width="24" height="24" rx="3" fill="#8cc4f4" />
              <path d="M4 19L12 4l8 15zM12 4v15" fill="#e8f5ff" stroke="#2f79c9" strokeWidth="2.5" />
            </svg>
            <div className="text-[6.8px] leading-[12px] font-bold text-white whitespace-nowrap tracking-[-0.25px]">
              7340063: FXOD - MetaTrader - Demo Account - [EURUSD,M15]
            </div>
            <div className="ml-auto flex gap-[1px]">
              <svg viewBox="0 0 20 20" className="w-[10.5px] h-[10.5px]"><rect x="0.5" y="0.5" width="19" height="19" rx="2" fill="#3a72ea" stroke="#dbe6fd" /><path d="M4 15h7" stroke="#fff" strokeWidth="3" /></svg>
              <svg viewBox="0 0 20 20" className="w-[10.5px] h-[10.5px]"><rect x="0.5" y="0.5" width="19" height="19" rx="2" fill="#3a72ea" stroke="#dbe6fd" /><path d="M8 8V4h8v7h-4M4 8h8v8H4z" fill="none" stroke="#fff" strokeWidth="2" /></svg>
              <svg viewBox="0 0 20 20" className="w-[10.5px] h-[10.5px]"><rect x="0.5" y="0.5" width="19" height="19" rx="2" fill="#e0492c" stroke="#f6dcd6" /><path d="M5 5l10 10M15 5L5 15" stroke="#fff" strokeWidth="2.5" /></svg>
            </div>
          </div>
          <div className="h-[10px] shrink-0 flex items-center bg-[#edebe0] pl-[2px] text-[5.8px] tracking-[-0.1px] text-[#222]">
            <svg viewBox="0 0 24 24" className="w-[7px] h-[7px]"><path d="M2 2h15v12H2z" fill="#cfe3fa" stroke="#4d80c4" strokeWidth="2" /><path d="M7 9h15v13H7z" fill="#fff" stroke="#4d80c4" strokeWidth="2" /></svg>
            <span className="w-[15px] ml-[4px]">File</span>
            <span className="w-[18.5px]">View</span>
            <span className="w-[21px]">Insert</span>
            <span className="w-[22px]">Charts</span>
            <span className="w-[20.5px]">Tools</span>
            <span className="w-[26.5px]">Window</span>
            <span>Help</span>
            <svg viewBox="0 0 24 8" className="ml-auto mr-[3px] w-[24px] h-[8px]" fill="none" stroke="#444">
              <path d="M2 6.500h3" strokeWidth="1.200" />
              <path d="M11.500 3V1.500h4v3H14M9.500 3.500h4v3h-4z" strokeWidth="0.9" />
              <path d="M19 2l4 4M23 2l-4 4" strokeWidth="1" />
            </svg>
          </div>
          <Toolbar />
          <Chart />
          <Tabs />
          <Status />
        </div>
        <div className="w-[1px] bg-[#d8dcf0]" />
        <div className="flex-1 flex flex-col">
          <div className="h-[417px] bg-[#6a78e0]" />
          <div className="flex-1 bg-[#0c3fae]" />
        </div>
      </div>
      <div className="h-[2px] flex">
        <div className="w-[47px] bg-[#3f9e45]" />
        <div className="w-[514px] bg-[#2a70e4]" />
        <div className="flex-1 bg-[#1697ef]" />
      </div>
    </div>
  );
};

export default App;
